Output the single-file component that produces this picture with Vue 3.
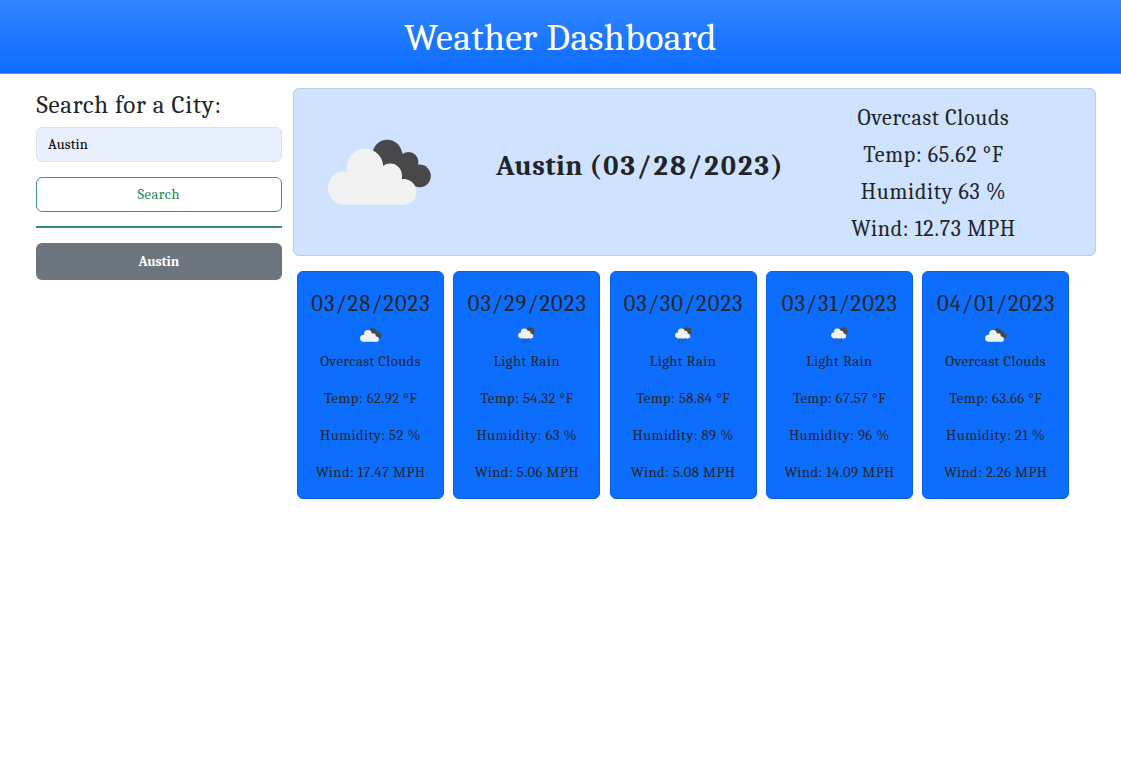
<script setup>
const days = [
  { date: '03/28/2023', icon: 'cloud', text: 'Overcast Clouds', temp: '62.92', humidity: 52, wind: '17.47' },
  { date: '03/29/2023', icon: 'rain', text: 'Light Rain', temp: '54.32', humidity: 63, wind: '5.06' },
  { date: '03/30/2023', icon: 'rain', text: 'Light Rain', temp: '58.84', humidity: 89, wind: '5.08' },
  { date: '03/31/2023', icon: 'rain', text: 'Light Rain', temp: '67.57', humidity: 96, wind: '14.09' },
  { date: '04/01/2023', icon: 'cloud', text: 'Overcast Clouds', temp: '63.66', humidity: 21, wind: '2.26' }
]
</script>

<template>
  <div class="page">
    <header class="header"><h1>Weather Dashboard</h1></header>
    <div class="content">
      <aside class="side">
        <h2>Search for a City:</h2>
        <input class="field" type="text" value="Austin" />
        <button class="search">Search</button>
        <div class="rule"></div>
        <button class="history">Austin</button>
      </aside>
      <main class="main">
        <section class="current">
          <svg class="cloud-large" viewBox="112 176 314 200">
            <g fill="#48484a">
              <circle cx="293" cy="222" r="44" />
              <circle cx="357" cy="245" r="30" />
              <circle cx="390" cy="287" r="34" />
              <path d="M252 230L325 190L390 321L340 300Z" />
            </g>
            <g fill="#f2f2f2">
              <circle cx="164" cy="324" r="50" />
              <circle cx="226" cy="260" r="55" />
              <circle cx="302" cy="285" r="35" />
              <circle cx="342" cy="335" r="39" />
              <path d="M171 260H281L337 285V300L342 374H164L120 310L172 276Z" />
            </g>
          </svg>
          <h2 class="city">Austin <span>(03/28/2023)</span></h2>
          <div class="details">
            <p>Overcast Clouds</p>
            <p>Temp: 65.62 °F</p>
            <p>Humidity 63 %</p>
            <p>Wind: 12.73 MPH</p>
          </div>
        </section>
        <section class="forecast">
          <article v-for="d in days" :key="d.date" class="card">
            <h3>{{ d.date }}</h3>
            <div class="icon">
              <svg v-if="d.icon === 'cloud'" class="cloud-small" viewBox="112 176 314 200">
                <g fill="#48484a">
                  <circle cx="293" cy="222" r="44" />
                  <circle cx="357" cy="245" r="30" />
                  <circle cx="390" cy="287" r="34" />
                  <path d="M252 230L325 190L390 321L340 300Z" />
                </g>
                <g fill="#f2f2f2">
                  <circle cx="164" cy="324" r="50" />
                  <circle cx="226" cy="260" r="55" />
                  <circle cx="302" cy="285" r="35" />
                  <circle cx="342" cy="335" r="39" />
                  <path d="M171 260H281L337 285V300L342 374H164L120 310L172 276Z" />
                </g>
              </svg>
              <svg v-else class="rain" viewBox="0 0 51 51">
                <circle cx="37" cy="14" r="13" fill="#48484a" />
                <g fill="#f2f2f2">
                  <circle cx="9" cy="25" r="8.5" />
                  <circle cx="19" cy="15" r="10.5" />
                  <circle cx="31" cy="18" r="7" />
                  <circle cx="38" cy="27" r="7.5" />
                  <path d="M9 16H29L38 24V34.5H9L3 26Z" />
                </g>
                <path d="M15 34l-1 5M24 36l-2 5M32 34l-2 5M12 43l-1 3M21 45l-1 4M30 42l-1 4" stroke="#48484a" stroke-width="3" />
              </svg>
            </div>
            <p>{{ d.text }}</p>
            <p>Temp: {{ d.temp }} °F</p>
            <p>Humidity: {{ d.humidity }} %</p>
            <p>Wind: {{ d.wind }} MPH</p>
          </article>
        </section>
      </main>
    </div>
  </div>
</template>

<style>
body { margin: 0; background: #fff; }
</style>

<style scoped>
* { box-sizing: border-box; }
.page { font-family: Cambria, Caladea, "Liberation Serif", serif; color: #212529; font-size: 14.7px; letter-spacing: .42px; }
h1, h2, h3, p { margin: 0; font-weight: 400; }
.header { height: 73.5px; background: linear-gradient(#3084ff, #0d6dff); border-bottom: 1px solid #4d94ff; text-align: center; }
h1 { color: #fff; font-size: 38px; line-height: 76px; letter-spacing: .3px; }
.content { display: flex; }
.side { width: 292.5px; padding: 17px 11px 0 36px; display: flex; flex-direction: column; }
.side h2 { font-size: 25px; line-height: 28px; letter-spacing: .72px; white-space: nowrap; margin-bottom: 8.5px; padding-left: .5px; }
.field, .search, .history { width: 100%; height: 35px; border-radius: 6px; font-family: inherit; font-size: 14.5px; padding: 0 11px; margin: 0; outline: 0; }
.field { background: #e8f0fe; border: 1px solid #dee2e6; color: #000; letter-spacing: .2px; }
.search { margin-top: 15px; background: #fff; border: 1px solid #41996f; color: #198754; letter-spacing: .5px; }
.rule { height: 2px; background: #2d9165; margin: 14px 0 15px; }
.history { height: 36.5px; background: #6c757d; border: 0; color: #fff; font-weight: 700; font-size: 14px; letter-spacing: -.15px; }
.main { width: 803px; padding-top: 14.5px; }
.current { height: 168px; background: #cfe2ff; border: 1px solid #b9cae5; border-radius: 6px; display: flex; align-items: center; padding-left: 33.5px; }
.cloud-large { width: 104.5px; height: 66.5px; flex: none; }
.city { width: 286px; margin: 0 0 13px 64.5px; font-weight: 700; font-size: 28.5px; line-height: 36px; letter-spacing: .4px; white-space: nowrap; flex: none; }
.city span { letter-spacing: 2.05px; }
.details { width: 303px; text-align: center; font-size: 22px; letter-spacing: .7px; padding-top: 4px; }
.details p { line-height: 37px; }
.forecast { display: flex; gap: 9.3px; padding: 14.5px 0 0 4.5px; }
.card { width: 147px; height: 228px; flex: none; background: #0d6efd; border: 1px solid #0b62dc; border-radius: 6px; text-align: center; padding-top: 17.5px; white-space: nowrap; }
.card h3 { font-size: 22.5px; line-height: 30px; letter-spacing: 1.05px; padding-left: 1px; }
.icon { height: 25px; display: flex; justify-content: center; padding-top: 8.5px; }
.cloud-small { width: 22px; height: 14px; }
.rain { width: 17px; height: 17px; margin-top: -1px; }
.card p { line-height: 37px; }
.card .icon + p { margin-top: -1px; }
</style>
